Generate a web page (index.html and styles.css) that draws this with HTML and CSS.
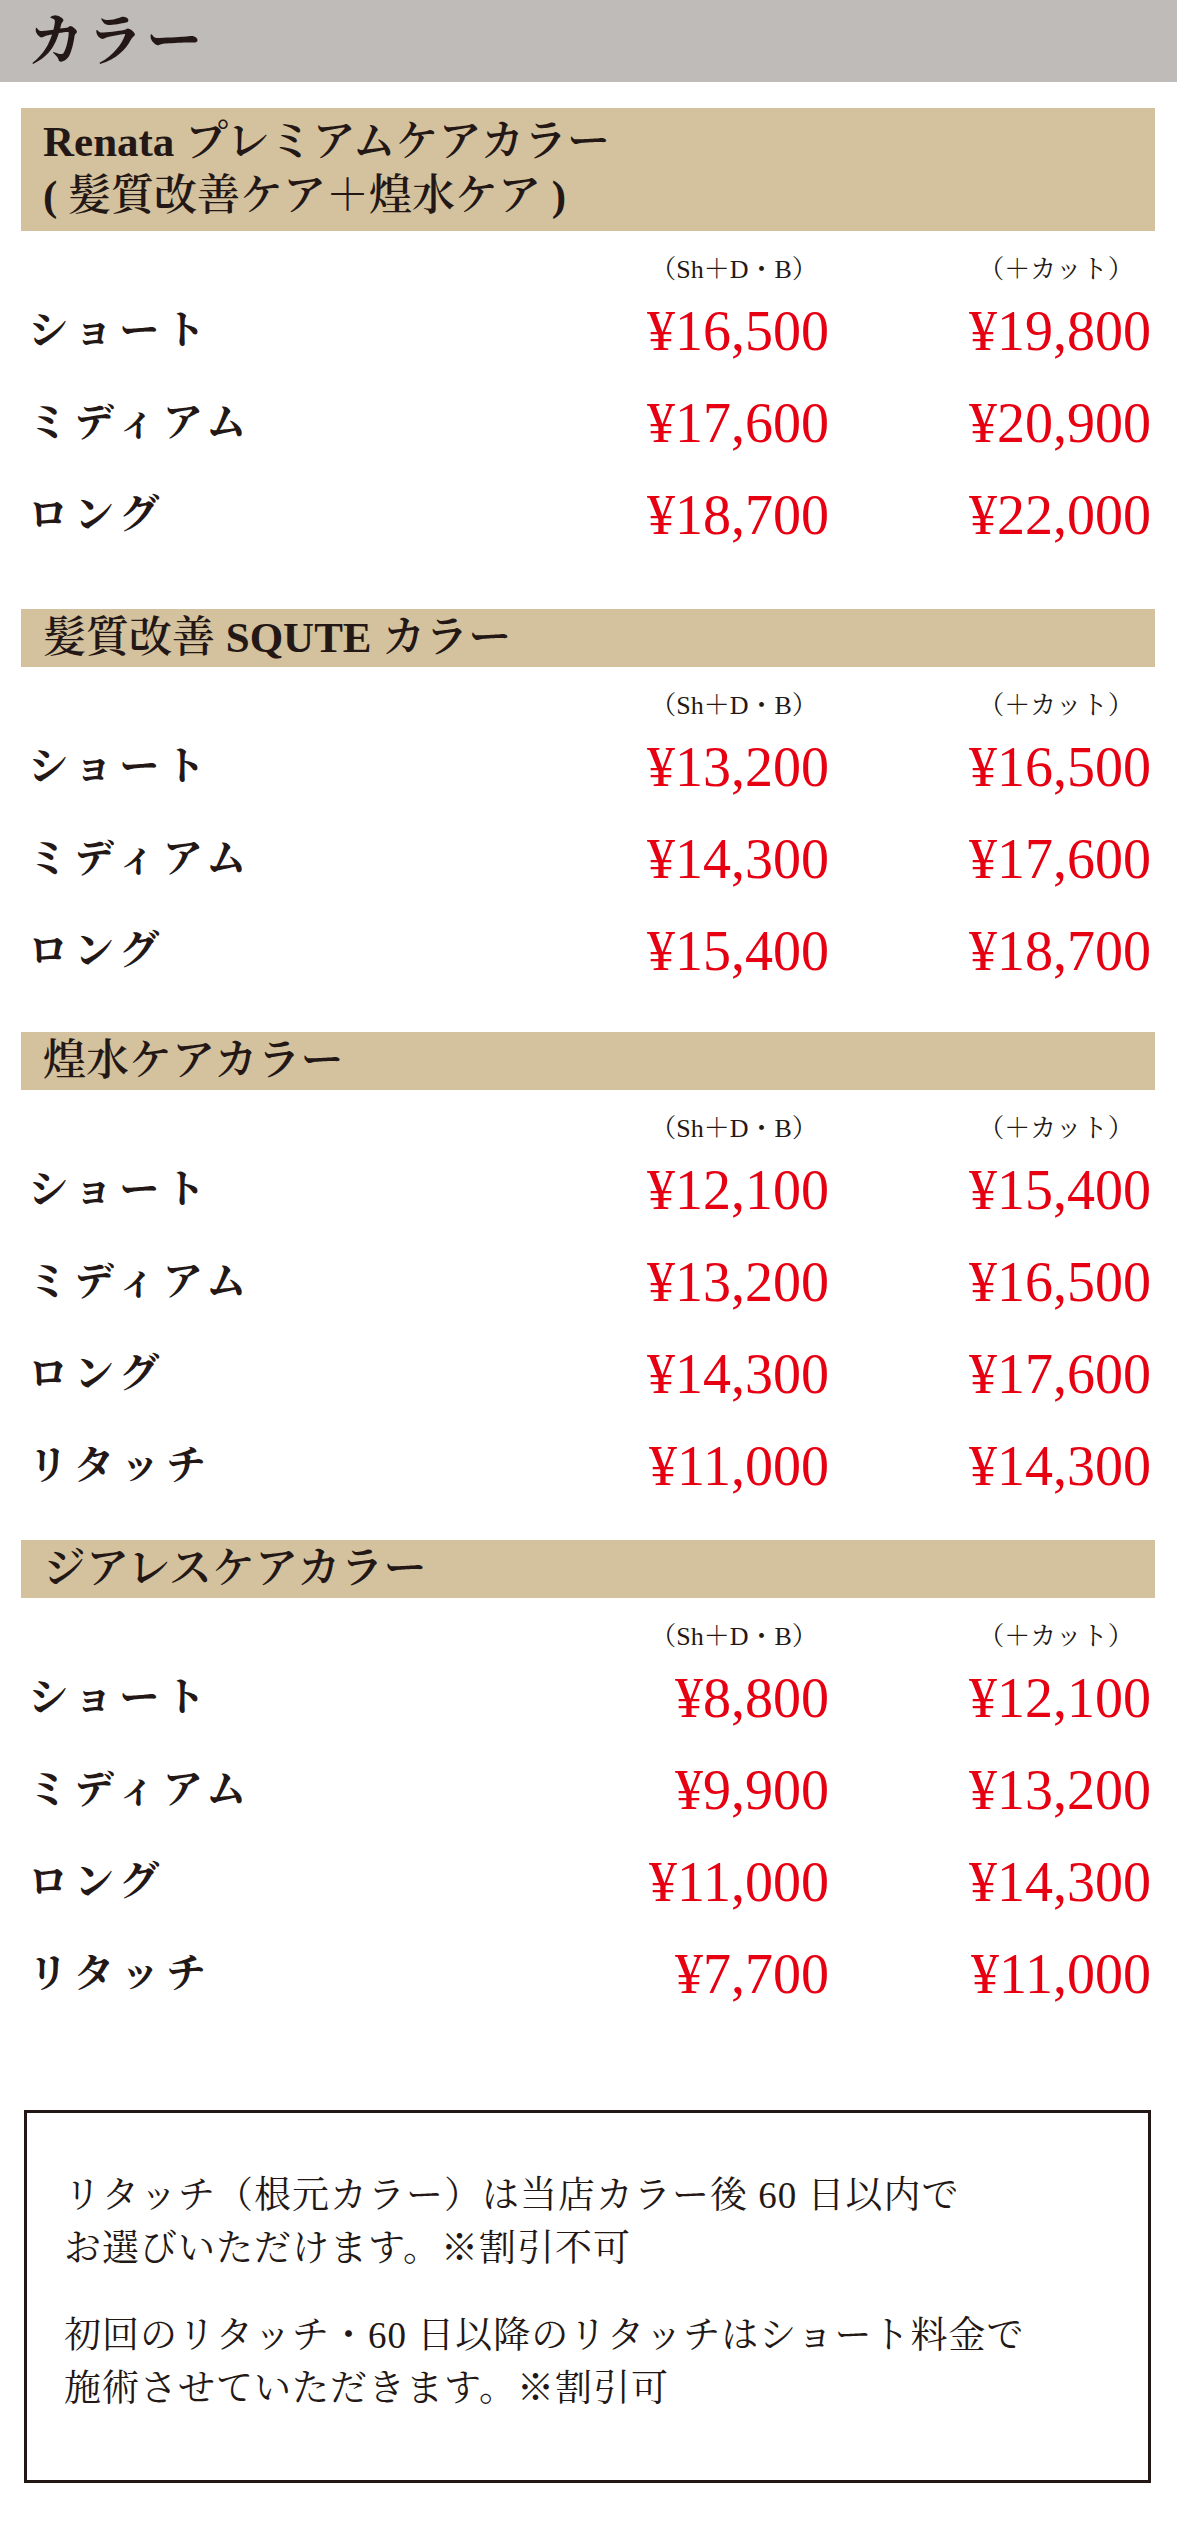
FILE: index.html
```html
<!DOCTYPE html>
<html lang="ja">
<head>
<meta charset="utf-8">
<title>カラー</title>
<link rel="stylesheet" href="styles.css">
</head>
<body>
<div class="page">
  <header class="title-bar"><h1 class="title">カラー</h1></header>
  <main class="menu">
    <section class="section section--first">
      <h2 class="band band--double">Renata プレミアムケアカラー<br>( 髪質改善ケア＋煌水ケア )</h2>
      <div class="row row--head"><span></span><span class="col-head">（Sh＋D・B）</span><span class="col-head">（＋カット）</span></div>
      <div class="row"><span class="label">ショート</span><span class="price">¥16,500</span><span class="price">¥19,800</span></div>
      <div class="row"><span class="label">ミディアム</span><span class="price">¥17,600</span><span class="price">¥20,900</span></div>
      <div class="row"><span class="label">ロング</span><span class="price">¥18,700</span><span class="price">¥22,000</span></div>
    </section>

    <section class="section section--gap-l">
      <h2 class="band">髪質改善 SQUTE カラー</h2>
      <div class="row row--head"><span></span><span class="col-head">（Sh＋D・B）</span><span class="col-head">（＋カット）</span></div>
      <div class="row"><span class="label">ショート</span><span class="price">¥13,200</span><span class="price">¥16,500</span></div>
      <div class="row"><span class="label">ミディアム</span><span class="price">¥14,300</span><span class="price">¥17,600</span></div>
      <div class="row"><span class="label">ロング</span><span class="price">¥15,400</span><span class="price">¥18,700</span></div>
    </section>

    <section class="section section--gap-m">
      <h2 class="band">煌水ケアカラー</h2>
      <div class="row row--head"><span></span><span class="col-head">（Sh＋D・B）</span><span class="col-head">（＋カット）</span></div>
      <div class="row"><span class="label">ショート</span><span class="price">¥12,100</span><span class="price">¥15,400</span></div>
      <div class="row"><span class="label">ミディアム</span><span class="price">¥13,200</span><span class="price">¥16,500</span></div>
      <div class="row"><span class="label">ロング</span><span class="price">¥14,300</span><span class="price">¥17,600</span></div>
      <div class="row"><span class="label">リタッチ</span><span class="price">¥11,000</span><span class="price">¥14,300</span></div>
    </section>

    <section class="section section--gap-s">
      <h2 class="band">ジアレスケアカラー</h2>
      <div class="row row--head"><span></span><span class="col-head">（Sh＋D・B）</span><span class="col-head">（＋カット）</span></div>
      <div class="row"><span class="label">ショート</span><span class="price">¥8,800</span><span class="price">¥12,100</span></div>
      <div class="row"><span class="label">ミディアム</span><span class="price">¥9,900</span><span class="price">¥13,200</span></div>
      <div class="row"><span class="label">ロング</span><span class="price">¥11,000</span><span class="price">¥14,300</span></div>
      <div class="row"><span class="label">リタッチ</span><span class="price">¥7,700</span><span class="price">¥11,000</span></div>
    </section>

    <div class="note">
      <p class="note-text">リタッチ（根元カラー）は当店カラー後 60 日以内で<br>お選びいただけます。※割引不可</p>
      <p class="note-text">初回のリタッチ・60 日以降のリタッチはショート料金で<br>施術させていただきます。※割引可</p>
    </div>
  </main>
</div>
</body>
</html>
```

FILE: styles.css
```css
* {
  box-sizing: border-box;
}

html, body {
  margin: 0;
  padding: 0;
  background: #ffffff;
}

body {
  color: #231815;
  font-family: "Liberation Serif", "Noto Serif CJK JP", "Noto Sans CJK JP", serif;
}

.page {
  width: 1177px;
  padding-bottom: 44px;
}

.title-bar {
  height: 82px;
  background: #bebbb8;
  display: flex;
  align-items: center;
  padding-left: 28px;
}

.title {
  margin: 0;
  font-size: 56px;
  font-weight: 700;
  line-height: 1;
  letter-spacing: 3px;
}

.menu {
  padding: 0 22px 0 21px;
}

.section--first {
  margin-top: 26px;
}

.section--gap-l {
  margin-top: 48px;
}

.section--gap-m {
  margin-top: 35px;
}

.section--gap-s {
  margin-top: 28px;
}

.band {
  margin: 0;
  background: #d4c19e;
  height: 58px;
  line-height: 58px;
  padding: 0 22px;
  font-size: 43px;
  font-weight: 600;
}

.band--double {
  height: 123px;
  line-height: 54px;
  padding-top: 7px;
  padding-bottom: 8px;
}

.row {
  display: grid;
  grid-template-columns: 1fr 190px 190px;
  column-gap: 132px;
  align-items: center;
  height: 92px;
  padding: 0 4px 0 7px;
}

.row--head {
  height: 30px;
  margin-top: 24px;
}

.col-head {
  text-align: center;
  font-size: 26px;
  line-height: 30px;
}

.label {
  font-size: 40px;
  font-weight: 700;
  letter-spacing: 6px;
  line-height: 1;
}

.price {
  text-align: right;
  color: #e60012;
  font-size: 56px;
  line-height: 1;
}

.note {
  margin: 90px 4px 0 3px;
  border: 3px solid #231815;
  height: 373px;
  padding: 56px 10px 0 37px;
}

.note-text {
  margin: 0;
  font-size: 37px;
  line-height: 53px;
  letter-spacing: 1px;
}

.note-text + .note-text {
  margin-top: 34px;
}
```
